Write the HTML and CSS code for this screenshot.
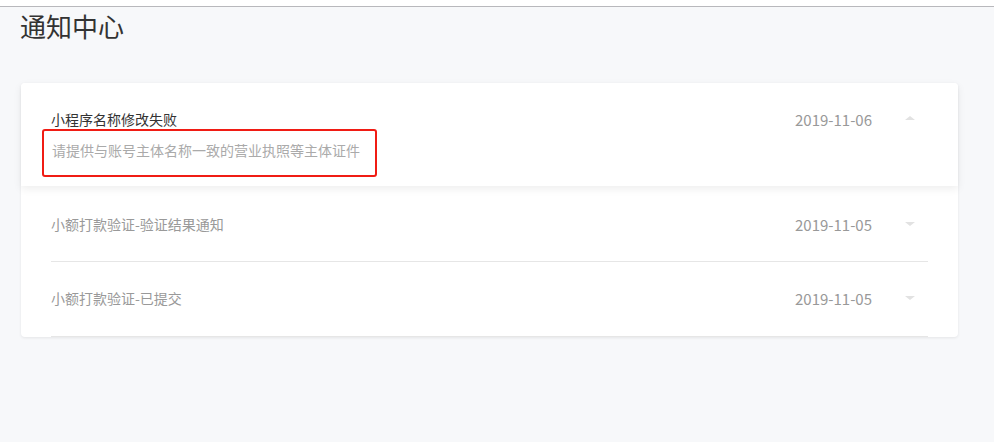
FILE: index.html
```html
<!DOCTYPE html>
<html lang="zh-CN">
  <head>
    <meta charset="UTF-8" />
    <meta name="viewport" content="width=device-width, initial-scale=1.0" />
    <title>通知中心</title>
    <link rel="stylesheet" href="styles.css">
  </head>
  <body>
    <div class="topbar"></div>
    <h1 class="page-title">通知中心</h1>
    <div class="notice-list">
      <div class="notice notice-open">
        <div class="notice-head">
          <span class="notice-title">小程序名称修改失败</span>
          <span class="notice-date">2019-11-06</span>
          <span class="arrow arrow-up"></span>
        </div>
        <div class="notice-body">请提供与账号主体名称一致的营业执照等主体证件</div>
      </div>
      <div class="notice notice-second">
        <div class="notice-head">
          <span class="notice-title">小额打款验证-验证结果通知</span>
          <span class="notice-date">2019-11-05</span>
          <span class="arrow arrow-down"></span>
        </div>
      </div>
      <div class="notice notice-third">
        <div class="notice-head">
          <span class="notice-title">小额打款验证-已提交</span>
          <span class="notice-date">2019-11-05</span>
          <span class="arrow arrow-down"></span>
        </div>
      </div>
    </div>
  </body>
</html>
```

FILE: styles.css
```css
body {
  margin: 0;
  background-color: #f7f8fa;
  font-family: "Noto Sans CJK SC", "Microsoft YaHei", sans-serif;
  color: #333;
  height: 442px;
}
.topbar {
  height: 6px;
  background-color: #fff;
  border-bottom: 1px solid #b8b8bc;
}
.page-title {
  margin: 0;
  padding-left: 20px;
  font-size: 26px;
  font-weight: normal;
  line-height: 38px;
  color: #333;
}
.notice-list {
  margin: 38px 36px 0 21px;
  background-color: #fff;
  border-radius: 4px;
  box-shadow: 0 1px 3px rgba(0, 0, 0, 0.08);
}
.notice-head {
  display: flex;
  align-items: center;
  height: 20px;
  font-size: 14px;
}
.notice-title {
  flex: 1;
  color: #999;
}
.notice-date {
  font-size: 15px;
  color: #999;
}
.arrow {
  width: 0;
  height: 0;
  margin: 0 13px 0 33px;
  border-left: 5px solid transparent;
  border-right: 5px solid transparent;
}
.arrow-up {
  border-bottom: 4px solid #e2e2e2;
  margin-top: -2px;
}
.arrow-down {
  border-top: 4px solid #e2e2e2;
}
.notice-open {
  position: relative;
  z-index: 1;
  padding: 26px 30px 9px;
  border-radius: 4px 4px 0 0;
  background-color: #fff;
  box-shadow: 0 3px 8px rgba(0, 0, 0, 0.07);
}
.notice-open .notice-title {
  color: #333;
}
.notice-body {
  box-sizing: border-box;
  width: 335px;
  height: 48px;
  margin-left: -9px;
  padding-left: 8px;
  border: 2px solid #f01c14;
  border-radius: 3px;
  font-size: 14px;
  line-height: 39px;
  color: #aaa;
}
.notice-second,
.notice-third {
  margin: 0 30px;
  border-bottom: 1px solid #e6e6e6;
}
.notice-second {
  padding: 28px 0 27px;
}
.notice-third {
  padding: 26px 0 28px;
}
```
